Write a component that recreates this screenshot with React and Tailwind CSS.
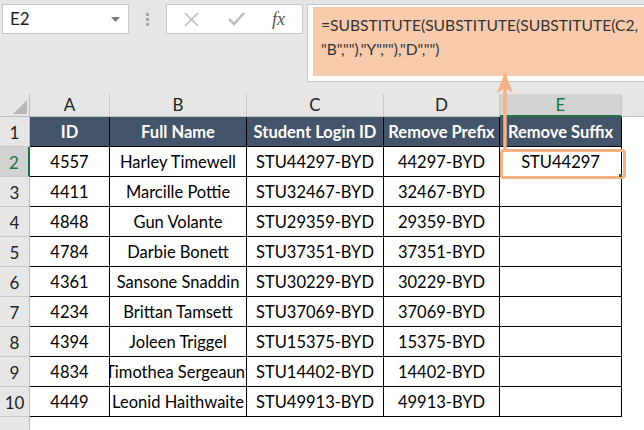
import React from "react";

const rows = [
  ["4557", "Harley Timewell", "STU44297-BYD", "44297-BYD", "STU44297"],
  ["4411", "Marcille Pottie", "STU32467-BYD", "32467-BYD", ""],
  ["4848", "Gun Volante", "STU29359-BYD", "29359-BYD", ""],
  ["4784", "Darbie Bonett", "STU37351-BYD", "37351-BYD", ""],
  ["4361", "Sansone Snaddin", "STU30229-BYD", "30229-BYD", ""],
  ["4234", "Brittan Tamsett", "STU37069-BYD", "37069-BYD", ""],
  ["4394", "Joleen Triggel", "STU15375-BYD", "15375-BYD", ""],
  ["4834", "Timothea Sergeaunt", "STU14402-BYD", "14402-BYD", ""],
  ["4449", "Leonid Haithwaite", "STU49913-BYD", "49913-BYD", ""],
];

const font = { fontFamily: "Lato, 'Open Sans', sans-serif" };

function ColHead({ children, sel, last }) {
  return (
    <div
      className={
        "h-[23px] flex items-center justify-center text-[17px] border-b " +
        (sel
          ? "bg-[#d2d2d2] text-[#217346] border-b-2 border-b-[#217346] border-r border-r-[#c6c6c6]"
          : "bg-[#e6e6e6] text-[#222] border-b-[#bdbdbd] " + (last ? "" : "border-r border-r-[#c6c6c6]"))
      }
    >
      {children}
    </div>
  );
}

function RowHead({ n, sel }) {
  return (
    <div
      className={
        "h-[30px] flex items-end justify-center pb-[1px] text-[17px] border-b border-b-[#c6c6c6] " +
        (sel
          ? "bg-[#d2d2d2] text-[#217346] border-r-2 border-r-[#217346]"
          : "bg-[#e6e6e6] text-[#222] border-r border-r-[#bdbdbd]")
      }
    >
      {n}
    </div>
  );
}

export default function App() {
  return (
    <div className="w-[644px] h-[430px] overflow-hidden bg-white relative" style={font}>
      {/* top bar */}
      <div className="h-[94px] bg-[#e6e6e6] flex items-start pt-[4px] pl-[2px]">
        <div className="w-[127px] h-[30px] bg-white border border-[#c6c6c6] flex items-center justify-between pl-[7px] pr-[8px]">
          <span className="text-[17px] text-[#222]">E2</span>
          <svg width="9" height="5" viewBox="0 0 9 5">
            <polygon points="0,0 9,0 4.5,5" fill="#777" />
          </svg>
        </div>
        <div className="w-[37px] h-[30px] flex flex-col items-center justify-center gap-[2px]">
          <div className="w-[3px] h-[3px] bg-[#a6a6a6]" />
          <div className="w-[3px] h-[3px] bg-[#a6a6a6]" />
          <div className="w-[3px] h-[3px] bg-[#a6a6a6]" />
        </div>
        <div className="w-[137px] h-[30px] bg-white border border-[#c6c6c6] flex items-center">
          <div className="w-[46px] flex justify-center pl-[2px]">
            <svg width="15" height="15" viewBox="0 0 15 15">
              <path d="M1 1 L14 14 M14 1 L1 14" stroke="#bdbdbd" strokeWidth="1.6" />
            </svg>
          </div>
          <div className="w-[46px] flex justify-center">
            <svg width="17" height="14" viewBox="0 0 17 14">
              <path d="M1 7 L6 12 L16 1" stroke="#bdbdbd" strokeWidth="2.6" fill="none" />
            </svg>
          </div>
          <div className="flex-1 flex justify-center pr-[4px]">
            <span
              className="text-[18px] italic text-[#555]"
              style={{ fontFamily: "'Liberation Serif', serif" }}
            >
              fx
            </span>
          </div>
        </div>
        <div className="ml-[4px] flex-1 h-[78px] bg-white border border-[#c6c6c6] border-r-0 pl-[5px] pt-[2px] pb-[5px]">
          <div className="h-full bg-[#f8cbad] pl-[8px] pt-[6px] text-[15.6px] leading-[24px] text-[#333] whitespace-nowrap overflow-hidden">
            <div>=SUBSTITUTE(SUBSTITUTE(SUBSTITUTE(C2,</div>
            <div>"B",""),"Y",""),"D","")</div>
          </div>
        </div>
      </div>

      {/* grid */}
      <div className="grid grid-cols-[30px_80px_137px_137px_116px_122px_1fr]">
        {/* column headers */}
        <div className="h-[23px] bg-[#e6e6e6] border-r border-r-[#bdbdbd] border-b border-b-[#bdbdbd] flex items-end justify-end p-[2px]">
          <svg width="14" height="14" viewBox="0 0 14 14">
            <polygon points="14,0 14,14 0,14" fill="#b8b8b8" />
          </svg>
        </div>
        <ColHead>A</ColHead>
        <ColHead>B</ColHead>
        <ColHead>C</ColHead>
        <ColHead>D</ColHead>
        <ColHead sel>E</ColHead>
        <ColHead last></ColHead>

        {/* row 1 */}
        <RowHead n={1} />
        {["ID", "Full Name", "Student Login ID", "Remove Prefix", "Remove Suffix"].map((h) => (
          <div
            key={h}
            className="h-[30px] pt-[2px] bg-[#44546a] text-white font-bold text-[16.5px] flex items-center justify-center border-r border-b border-black whitespace-nowrap overflow-hidden"
          >
            {h}
          </div>
        ))}
        <div className="h-[30px] bg-white" />

        {rows.map((r, i) => (
          <React.Fragment key={i}>
            <RowHead n={i + 2} sel={i === 0} />
            {r.map((c, j) => (
              <div
                key={j}
                className="h-[30px] pt-[2px] bg-white text-[16.5px] text-black flex items-center justify-center border-r border-b border-black whitespace-nowrap overflow-hidden"
              >
                {c}
              </div>
            ))}
            <div className="h-[30px] bg-white" />
          </React.Fragment>
        ))}

        {/* row 11 partial */}
        <div className="h-[13px] bg-[#e6e6e6] border-r border-r-[#bdbdbd]" />
        <div className="h-[13px] col-span-6 bg-white" />
      </div>

      {/* selection highlight */}
      <div className="absolute left-[500px] top-[149px] w-[126px] h-[30px] border-[3px] border-[#f4b183] rounded-[4px]" />
      <div className="absolute left-[619px] top-[174px] w-[3px] h-[3px] bg-[#217346]" />

      {/* arrow */}
      <svg className="absolute left-[494px] top-[71px]" width="22" height="82" viewBox="0 0 22 82">
        <line x1="11" y1="10" x2="11" y2="80" stroke="#f4b183" strokeWidth="3.5" />
        <polygon points="11,1 19,22 11,17 3,22" fill="#f4b183" />
      </svg>
    </div>
  );
}
